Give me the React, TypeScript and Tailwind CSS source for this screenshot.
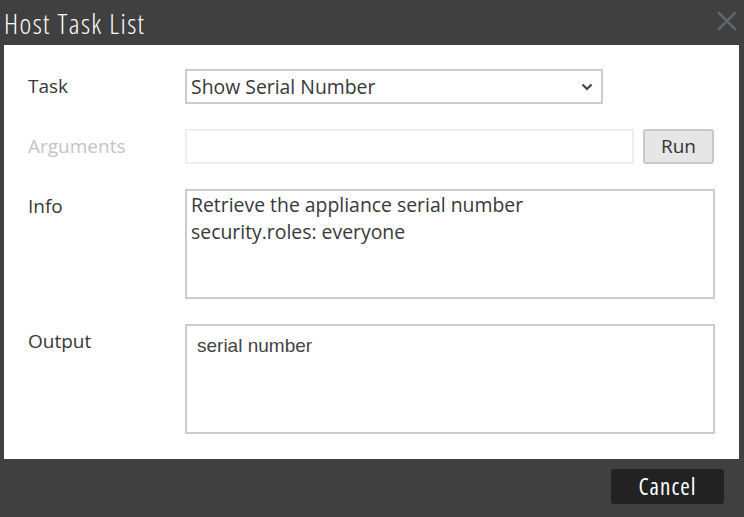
import React from 'react';

const labelCls = 'w-[157px] shrink-0 text-[19px] leading-[35px]';

export default function App() {
  return (
    <div className="w-[744px] h-[517px] bg-[#404040] flex flex-col" style={{ fontFamily: '"Open Sans", sans-serif' }}>
      <div className="h-[45px] flex items-center justify-between pl-[4px] pr-[7px]">
        <span className="text-white text-[28px] font-light font-stretch-condensed tracking-[1.4px] leading-none">Host Task List</span>
        <svg width="20" height="20" viewBox="0 0 20 20" className="mb-[4px]">
          <path d="M2 2 L18 18 M18 2 L2 18" stroke="#5c6670" strokeWidth="2.6" strokeLinecap="round" />
        </svg>
      </div>

      <div className="ml-[4px] mr-[5px] h-[414px] bg-white pt-[24px] pl-[24px] text-[#383838] flex flex-col">
        <div className="flex items-center">
          <div className={labelCls}>Task</div>
          <div className="w-[418px] h-[35px] border-2 border-[#ccc] flex items-center justify-between pl-[4px] pr-[8px]">
            <span className="text-[19.4px]">Show Serial Number</span>
            <svg width="12" height="8" viewBox="0 0 12 8">
              <path d="M1.5 1.5 L6 6 L10.5 1.5" fill="none" stroke="#444" strokeWidth="2.2" />
            </svg>
          </div>
        </div>

        <div className="flex items-center mt-[25px]">
          <div className={`${labelCls} text-[#c4c4c4]`}>Arguments</div>
          <div className="w-[449px] h-[35px] border-2 border-[#eee]" />
          <button className="ml-[9px] w-[71px] h-[35px] bg-[#e6e6e6] border-2 border-[#c8c8c8] rounded-[3px] text-[19px] text-[#333]">Run</button>
        </div>

        <div className="flex items-start mt-[25px]">
          <div className={labelCls}>Info</div>
          <div className="w-[530px] h-[110px] border-2 border-[#ccc] pl-[4px] text-[19.4px] leading-[27px]">
            <div>Retrieve the appliance serial number</div>
            <div>security.roles: everyone</div>
          </div>
        </div>

        <div className="flex items-start mt-[25px]">
          <div className={labelCls}>Output</div>
          <div className="w-[530px] h-[110px] border-2 border-[#ccc] pl-[10px] pt-[6px] text-[19px] leading-[27px] text-[#444]" style={{ fontFamily: '"Liberation Sans", sans-serif' }}>
            serial number
          </div>
        </div>
      </div>

      <div className="flex justify-end pr-[20px] pt-[10px]">
        <button className="w-[113px] h-[35px] bg-[#222] rounded-[3px] text-white text-[23px] font-stretch-condensed tracking-[1px]">Cancel</button>
      </div>
    </div>
  );
}
